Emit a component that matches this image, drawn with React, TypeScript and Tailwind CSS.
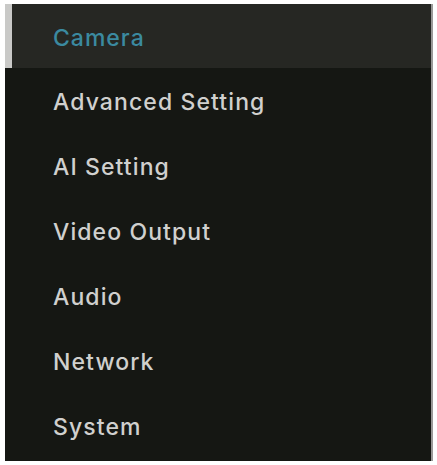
const items = [
  "Camera",
  "Advanced Setting",
  "AI Setting",
  "Video Output",
  "Audio",
  "Network",
  "System",
];

export default function App() {
  return (
    <div className="h-[465px] w-[437px] bg-white pt-[4px] pl-[5px] pr-[4px]">
      <div
        className="flex h-[457px] flex-col border-r-2 border-[#9a9a98] bg-[#151713]"
        style={{ fontFamily: "Inter, 'Noto Sans', sans-serif" }}
      >
        {items.map((item, i) =>
          i === 0 ? (
            <div key={item} className="flex h-[64px] items-stretch bg-[#262723]">
              <div className="w-[7px] bg-[#c9c9c7]" />
              <span className="flex items-center pl-[41px] pt-[5px] text-[23px] font-medium tracking-[1px] text-[#3b8aa0]">
                {item}
              </span>
            </div>
          ) : (
            <div
              key={item}
              className="flex h-[65px] items-center pl-[48px] pt-[4px] text-[23px] font-medium tracking-[1.1px] text-[#d0d0ce]"
            >
              {item}
            </div>
          )
        )}
      </div>
    </div>
  );
}
